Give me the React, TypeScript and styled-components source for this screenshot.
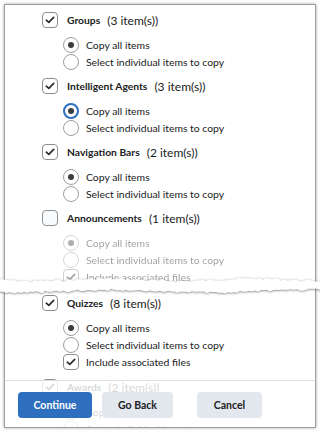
import styled, { createGlobalStyle } from "styled-components";

const GlobalStyle = createGlobalStyle`
  html, body {
    margin: 0;
    padding: 0;
    background: #ffffff;
  }
  body {
    font-family: Lato, "Noto Sans", sans-serif;
    color: #202122;
  }
`;

const Page = styled.div`
  position: relative;
  width: 320px;
  height: 431px;
  padding: 4px;
  box-sizing: border-box;
  overflow: hidden;
`;

const Frame = styled.div`
  position: relative;
  height: 424px;
  box-sizing: border-box;
  border: 1px solid #9d9d9d;
  box-shadow: 0 0 3px rgba(0, 0, 0, 0.35);
  overflow: hidden;
  background: #fff;
`;

const List = styled.div`
  padding: 5px 0 0 37px;
`;

const Section = styled.div<{ $gap?: number }>`
  margin-bottom: ${(p) => p.$gap ?? 6}px;
`;

const Header = styled.div`
  display: flex;
  align-items: center;
  height: 20px;
`;

const Label = styled.span`
  font-weight: 700;
  font-size: 10.3px;
  margin-left: 9px;
`;

const Count = styled.span`
  font-size: 12px;
  margin-left: 7px;
`;

const Options = styled.div<{ $disabled?: boolean }>`
  margin: 6px 0 0 21px;
  opacity: ${(p) => (p.$disabled ? 0.42 : 1)};
`;

const Option = styled.div`
  display: flex;
  align-items: center;
  height: 17px;
  font-size: 10.4px;
`;

const OptionText = styled.span`
  margin-left: 7px;
`;

const Box = styled.span<{ $checked?: boolean }>`
  display: inline-flex;
  align-items: center;
  justify-content: center;
  width: 16px;
  height: 16px;
  box-sizing: border-box;
  border: 1px solid #8a8f93;
  border-radius: 4px;
  background: ${(p) => (p.$checked ? "#ffffff" : "#f9fafc")};
  flex-shrink: 0;
`;

const Radio = styled.span<{ $checked?: boolean; $focus?: boolean }>`
  display: inline-flex;
  align-items: center;
  justify-content: center;
  width: 16px;
  height: 16px;
  box-sizing: border-box;
  border-radius: 50%;
  border: ${(p) => (p.$focus ? "2px solid #2e6fc0" : "1px solid #9a9fa3")};
  background: #fff;
  flex-shrink: 0;

  &::after {
    content: "";
    display: ${(p) => (p.$checked ? "block" : "none")};
    width: 6px;
    height: 6px;
    border-radius: 50%;
    background: #3a3d40;
  }
`;

const Footer = styled.div`
  position: absolute;
  left: 0;
  right: 0;
  bottom: 0;
  height: 47px;
  border-top: 1px solid #dcdfe4;
  background: rgba(255, 255, 255, 0.82);
  display: flex;
  align-items: flex-start;
  padding: 11px 0 0 13px;
  box-sizing: border-box;
`;

const Button = styled.button<{ $primary?: boolean; $width: number; $space?: number }>`
  width: ${(p) => p.$width}px;
  height: 26px;
  margin-left: ${(p) => p.$space ?? 0}px;
  border: none;
  border-radius: 4px;
  font-family: Lato, "Noto Sans", sans-serif;
  font-weight: 700;
  font-size: 10.5px;
  color: ${(p) => (p.$primary ? "#ffffff" : "#202122")};
  background: ${(p) => (p.$primary ? "#2e6fc0" : "#e3e8ef")};
  padding: 0;
`;

const TearWrap = styled.div`
  position: absolute;
  left: 0;
  top: 273px;
  width: 320px;
  height: 24px;
  pointer-events: none;
`;

const Check = () => (
  <svg width="10" height="8" viewBox="0 0 10 8">
    <path d="M1.3 4.2 L3.8 6.4 L8.7 1.4" fill="none" stroke="#2a2c2e" strokeWidth="1.7" strokeLinecap="round" strokeLinejoin="round" />
  </svg>
);

// ragged torn-paper band
const tearPath = (() => {
  let seed = 7;
  const rnd = () => {
    seed = (seed * 9301 + 49297) % 233280;
    return seed / 233280;
  };
  const top: string[] = [];
  const bottom: string[] = [];
  for (let x = -4; x <= 324; x += 3) {
    const wave = Math.sin(x / 23) * 1.3;
    top.push(`${x},${(7 + wave + (rnd() - 0.5) * 2.4).toFixed(1)}`);
  }
  for (let x = 324; x >= -4; x -= 3) {
    const wave = Math.sin(x / 31 + 1) * 1.4;
    bottom.push(`${x},${(18 + wave + (rnd() - 0.5) * 2.2).toFixed(1)}`);
  }
  return `M${top.join(" L")} L${bottom.join(" L")} Z`;
})();

const Tear = () => (
  <TearWrap>
    <svg width="320" height="24" viewBox="0 0 320 24">
      <defs>
        <filter id="tearShadow" x="-5%" y="-50%" width="110%" height="200%">
          <feDropShadow dx="0" dy="0.6" stdDeviation="1" floodColor="#4a4a4a" floodOpacity="0.8" />
        </filter>
      </defs>
      <path d={tearPath} fill="#ffffff" filter="url(#tearShadow)" />
    </svg>
  </TearWrap>
);

type Opt = { text: string; kind: "radio" | "box"; checked?: boolean; focus?: boolean };

const copyOpts = (focus = false): Opt[] => [
  { text: "Copy all items", kind: "radio", checked: true, focus },
  { text: "Select individual items to copy", kind: "radio" },
];

const withFiles: Opt = { text: "Include associated files", kind: "box", checked: true };

const sections: { label: string; count: number; checked: boolean; disabled?: boolean; gap?: number; opts: Opt[] }[] = [
  { label: "Groups", count: 3, checked: true, opts: copyOpts() },
  { label: "Intelligent Agents", count: 3, checked: true, opts: copyOpts(true) },
  { label: "Navigation Bars", count: 2, checked: true, opts: copyOpts() },
  { label: "Announcements", count: 1, checked: false, disabled: true, gap: 8, opts: [...copyOpts(), withFiles] },
  { label: "Quizzes", count: 8, checked: true, gap: 7, opts: [...copyOpts(), withFiles] },
  { label: "Awards", count: 2, checked: true, opts: copyOpts() },
];

export default function App() {
  return (
    <>
      <GlobalStyle />
      <Page>
        <Frame>
          <List>
            {sections.map((s) => (
              <Section key={s.label} $gap={s.gap}>
                <Header>
                  <Box $checked={s.checked}>{s.checked && <Check />}</Box>
                  <Label>{s.label}</Label>
                  <Count>({s.count} item(s))</Count>
                </Header>
                <Options $disabled={s.disabled}>
                  {s.opts.map((o) => (
                    <Option key={o.text}>
                      {o.kind === "radio" ? (
                        <Radio $checked={o.checked} $focus={o.focus} />
                      ) : (
                        <Box $checked={o.checked}>{o.checked && <Check />}</Box>
                      )}
                      <OptionText>{o.text}</OptionText>
                    </Option>
                  ))}
                </Options>
              </Section>
            ))}
          </List>
          <Footer>
            <Button $primary $width={74}>Continue</Button>
            <Button $width={71} $space={10}>Go Back</Button>
            <Button $width={65} $space={24}>Cancel</Button>
          </Footer>
        </Frame>
        <Tear />
      </Page>
    </>
  );
}
